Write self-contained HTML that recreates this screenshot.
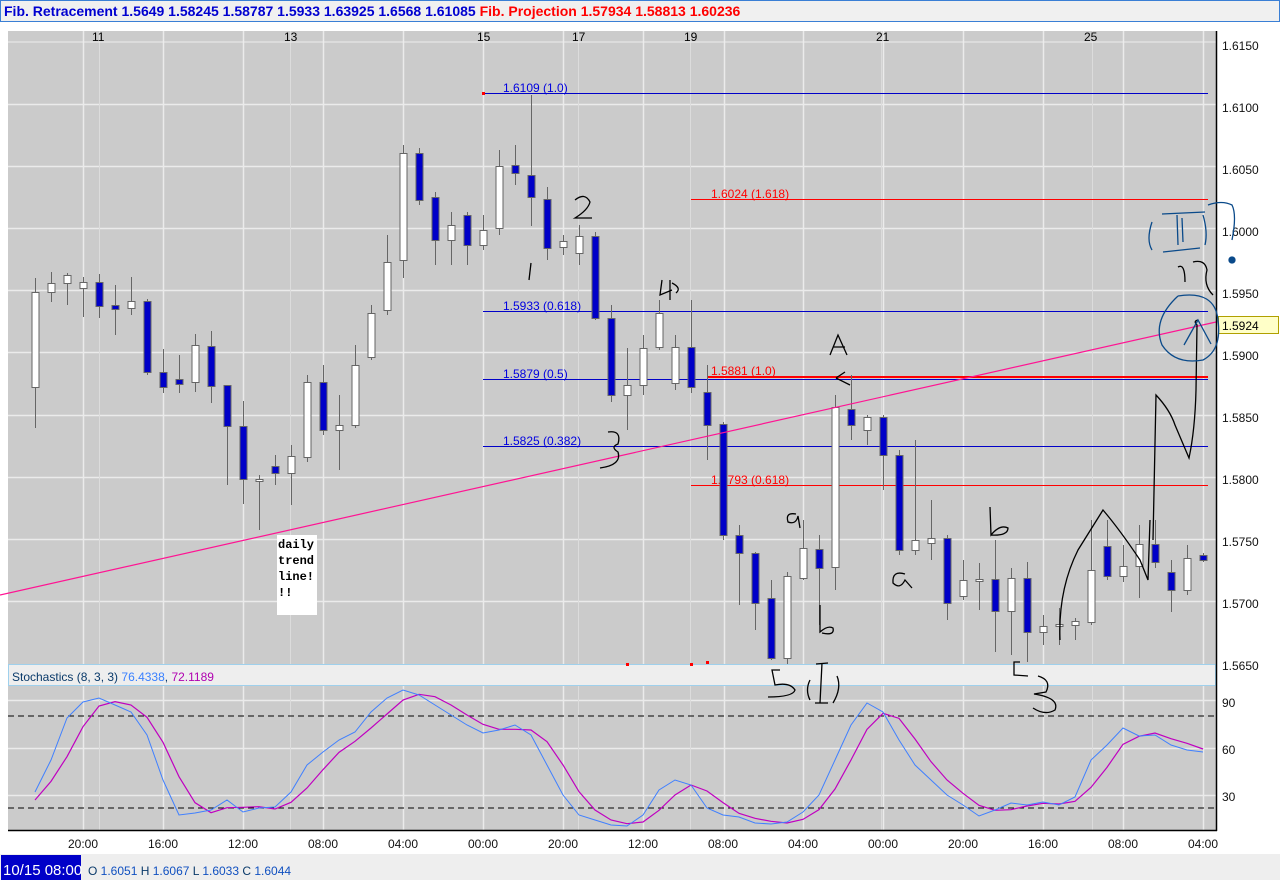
<!DOCTYPE html>
<html><head><meta charset="utf-8"><style>
body{margin:0;width:1280px;height:880px;overflow:hidden;background:#fff;font-family:"Liberation Sans",sans-serif}
svg{position:absolute;left:0;top:0}
</style></head><body>
<svg id="s" width="1280" height="880" xmlns="http://www.w3.org/2000/svg" font-family="Liberation Sans, sans-serif">
<rect x="0" y="0" width="1280" height="880" fill="#fff"/>
<rect x="0.5" y="0.5" width="1279" height="21" fill="#f0f0f0" stroke="#3a7fd5"/>
<text x="4" y="16" font-size="14" font-weight="bold" fill="#0000d0">Fib. Retracement 1.5649 1.58245 1.58787 1.5933 1.63925 1.6568 1.61085 <tspan fill="#ff0000">Fib. Projection 1.57934 1.58813 1.60236</tspan></text>
<rect x="8" y="31" width="1208" height="799" fill="#cbcbcb"/>
<g id="grid"></g>
<line x1="8" y1="42" x2="1216" y2="42" stroke="#eee" stroke-width="1"/>
<g font-size="12" fill="#000">
<text x="92" y="41">11</text><text x="284" y="41">13</text><text x="477" y="41">15</text><text x="572" y="41">17</text><text x="684" y="41">19</text><text x="876" y="41">21</text><text x="1084" y="41">25</text>
</g>
<!-- fib lines -->
<line x1="483" y1="93.5" x2="1208" y2="93.5" stroke="#0000c8"/>
<rect x="482" y="92" width="3" height="3" fill="red"/>
<line x1="691" y1="199.5" x2="1208" y2="199.5" stroke="#ff0000"/>
<line x1="483" y1="311.5" x2="1208" y2="311.5" stroke="#0000c8"/>
<line x1="707" y1="376.5" x2="1208" y2="376.5" stroke="#ff0000"/>
<line x1="483" y1="379.5" x2="1208" y2="379.5" stroke="#0000c8"/>
<line x1="707" y1="377.5" x2="1208" y2="377.5" stroke="#ff0000"/>
<line x1="483" y1="446.5" x2="1208" y2="446.5" stroke="#0000c8"/>
<line x1="691" y1="485.5" x2="1208" y2="485.5" stroke="#ff0000"/>
<g font-size="12">
<text x="503" y="92" fill="#0000e0">1.6109 (1.0)</text>
<text x="711" y="198" fill="#ff0000">1.6024 (1.618)</text>
<text x="503" y="310" fill="#0000e0">1.5933 (0.618)</text>
<text x="503" y="378" fill="#0000e0">1.5879 (0.5)</text>
<text x="711" y="375" fill="#ff0000">1.5881 (1.0)</text>
<text x="503" y="445" fill="#0000e0">1.5825 (0.382)</text>
<text x="711" y="484" fill="#ff0000">1.5793 (0.618)</text>
</g>
<g id="candles"></g>
<line x1="0" y1="595" x2="1216" y2="322" stroke="#ff1493" stroke-width="1.2"/>
<rect x="277" y="535" width="40" height="80" fill="#fff"/>
<g font-family="Liberation Mono, monospace" font-weight="bold" font-size="12" fill="#000">
<text x="278" y="548">daily</text><text x="278" y="564">trend</text><text x="278" y="580">line!</text><text x="278" y="596">!!</text>
</g>
<!-- stochastics panel -->
<rect x="8.5" y="664.5" width="1207" height="21" fill="#eeeeee" stroke="#9fd0ec"/>
<text x="12" y="681" font-size="12" fill="#0a3a6a">Stochastics (8, 3, 3) <tspan fill="#3a80ff">76.4338</tspan>, <tspan fill="#b000b0">72.1189</tspan></text>
<line x1="8" y1="716" x2="1216" y2="716" stroke="#000" stroke-dasharray="6,4"/>
<line x1="8" y1="808" x2="1216" y2="808" stroke="#000" stroke-dasharray="6,4"/>
<g id="stoch"></g>
<line x1="8" y1="830.5" x2="1217" y2="830.5" stroke="#000" stroke-width="1.5"/>
<line x1="1216.5" y1="31" x2="1216.5" y2="831" stroke="#000" stroke-width="1.5"/>
<g font-size="12" fill="#111">
<text x="1222" y="50">1.6150</text><text x="1222" y="112">1.6100</text><text x="1222" y="174">1.6050</text><text x="1222" y="236">1.6000</text><text x="1222" y="298">1.5950</text><text x="1222" y="360">1.5900</text><text x="1222" y="422">1.5850</text><text x="1222" y="484">1.5800</text><text x="1222" y="546">1.5750</text><text x="1222" y="608">1.5700</text><text x="1222" y="670">1.5650</text>
<text x="1222" y="707">90</text><text x="1222" y="754">60</text><text x="1222" y="801">30</text>
</g>
<rect x="1218.5" y="316.5" width="60" height="17" fill="#ffffc8" stroke="#b0a000"/>
<text x="1222" y="330" font-size="12" fill="#000">1.5924</text>
<g font-size="12" fill="#111">
<text x="68" y="848">20:00</text><text x="148" y="848">16:00</text><text x="228" y="848">12:00</text><text x="308" y="848">08:00</text><text x="388" y="848">04:00</text><text x="468" y="848">00:00</text><text x="548" y="848">20:00</text><text x="628" y="848">12:00</text><text x="708" y="848">08:00</text><text x="788" y="848">04:00</text><text x="868" y="848">00:00</text><text x="948" y="848">20:00</text><text x="1028" y="848">16:00</text><text x="1108" y="848">08:00</text><text x="1188" y="848">04:00</text>
</g>
<rect x="0" y="854" width="1280" height="26" fill="#eeeeee"/>
<rect x="1" y="855" width="80" height="25" fill="#0000c8"/>
<text x="3" y="875" font-size="15" fill="#fff">10/15 08:00</text>
<text x="88" y="875" font-size="12" fill="#0a3a6a">O <tspan fill="#1050c0">1.6051</tspan> H <tspan fill="#1050c0">1.6067</tspan> L <tspan fill="#1050c0">1.6033</tspan> C <tspan fill="#1050c0">1.6044</tspan></text>
<!-- hand annotations -->
<g fill="none" stroke="#000" stroke-width="1.3">
<path d="M575 200 Q585 192 590 202 Q588 210 575 218 L592 218"/>
<path d="M531 263 L529 280"/>
<path d="M662 280 L660 295 L672 290 M670 280 L670 300 M672 283 Q682 288 676 293"/>
<path d="M608 432 Q622 430 618 444 Q610 447 618 452 Q622 465 600 468"/>
<path d="M830 355 L838 335 L847 355 M833 347 L845 347"/>
<path d="M836 378 L845 372 M836 378 L850 385"/>
<path d="M796 514 Q785 512 788 522 Q796 525 798 516 L800 528"/>
<path d="M820 605 L820 632 Q828 625 833 628 Q835 636 822 633"/>
<path d="M905 574 Q892 570 893 583 Q900 590 905 580 L912 588"/>
<path d="M990 507 L991 535 Q1000 524 1008 528 Q1008 536 991 535"/>
<path d="M780 670 L772 670 L775 685 Q790 682 795 690 Q793 697 768 697"/>
<path d="M810 680 Q805 690 810 700 M816 664 L828 663 M822 663 L820 703 M815 703 L828 703 M837 676 Q842 688 833 703"/>
<path d="M1020 662 L1014 662 L1014 675 L1028 676"/>
<path d="M1038 676 Q1052 680 1046 692 L1034 694 Q1060 698 1055 710 Q1045 716 1033 708"/>
<path d="M1060 640 Q1058 590 1078 550 L1103 510 Q1120 530 1140 560 L1148 580 L1150 520"/>
<path d="M1153 540 L1156 395 Q1170 410 1175 425 L1189 458 Q1195 430 1196 390 L1197 325 Q1193 321 1198 320"/>
<path d="M1178 267 Q1185 263 1185 282 M1193 262 Q1205 259 1207 270 Q1203 285 1213 295"/>
</g>
<g fill="none" stroke="#0a4a8a" stroke-width="1.3">
<path d="M1152 222 Q1146 240 1152 250 M1162 214 L1205 212 M1177 215 L1178 245 M1182 218 L1183 242 M1163 252 L1200 248 M1203 215 Q1208 232 1205 245"/>
<path d="M1208 205 Q1222 200 1232 205 Q1237 215 1232 240"/>
<path d="M1178 296 Q1215 290 1218 320 Q1222 350 1203 360 Q1175 365 1162 345 Q1152 320 1178 296"/>
<path d="M1184 345 L1198 320 L1211 344"/>
<circle cx="1232" cy="260" r="3" fill="#0a4a8a"/>
</g>
<rect x="626" y="663" width="3" height="3" fill="red"/><rect x="690" y="663" width="3" height="3" fill="red"/><rect x="706" y="661" width="3" height="3" fill="red"/>
</svg>
<script>
var NS="http://www.w3.org/2000/svg";
function el(p,t,a){var e=document.createElementNS(NS,t);for(var k in a)e.setAttribute(k,a[k]);document.getElementById(p).appendChild(e);return e;}
// grid
[104,166,228,290,352,415,477,539,601,700,748,795].forEach(function(y){el("grid","line",{x1:8,x2:1216,y1:y+.5,y2:y+.5,stroke:"#ebebeb","stroke-width":1.5});});
[83,163,243,323,403,483,563,643,724,803,883,963,1043,1123,1203].forEach(function(x){el("grid","line",{x1:x+.5,x2:x+.5,y1:31,y2:830,stroke:"#ebebeb","stroke-width":1.5});});
[99,290,578,690,881,1092].forEach(function(x){el("grid","line",{x1:x+.5,x2:x+.5,y1:31,y2:830,stroke:"#dcdcdc"});});
// candles: [white?, top, bottom, wickTop, wickBot]
var C=[[1,292,387,278,428],[1,283,292,272,302],[1,275,283,273,305],[1,282,288,277,317],[0,282,306,274,318],[0,305,309,285,335],[1,301,308,277,315],[0,301,372,299,375],[0,372,387,349,393],[0,379,384,355,393],[1,345,382,334,392],[0,346,386,331,403],[0,385,426,385,485],[0,426,479,401,504],
[1,479,481,475,530],[0,466,473,455,485],[1,456,473,445,505],[1,382,457,375,462],[0,382,430,365,435],[1,425,430,395,470],[1,365,425,345,428],[1,313,357,305,360],[1,262,310,235,315],[1,153,260,145,278],[0,153,200,148,205],[0,197,240,192,265],[1,225,240,212,265],[0,215,245,212,265],[1,230,245,215,250],[1,166,228,150,235],[0,165,173,145,185],[0,175,197,95,226],[0,199,248,187,260],[1,241,247,235,255],[1,236,253,225,265],[0,236,318,232,320],[0,318,395,305,402],[1,385,395,348,430],[1,348,385,335,395],[1,313,347,300,350],[1,347,383,335,390],[0,347,387,300,393],[0,392,425,365,460],[0,424,535,422,540],[0,535,553,525,605],[0,553,603,552,630],[0,598,658,580,660],[1,576,658,572,665],[1,548,578,520,580],[0,549,568,535,625],[1,407,567,395,590],[0,409,425,375,440],[1,417,430,415,445],[0,417,455,415,490],[0,455,550,450,555],[1,540,550,440,555],[1,538,543,500,560],[0,538,603,535,620],[1,580,596,560,600],[1,579,581,563,610],[0,579,611,540,652],[1,578,611,568,655],[0,578,632,562,662],[1,626,632,615,645],[1,624,626,608,645],[1,621,625,618,640],[1,570,622,520,625],[0,546,576,520,580],[1,566,576,545,582],[1,544,566,525,598],[0,544,562,520,568],[0,572,590,560,612],[1,558,590,545,595],[0,555,560,553,562]];
C.forEach(function(c,i){var x=35+16*i;
el("candles","line",{x1:x+.5,x2:x+.5,y1:c[3],y2:c[4],stroke:"#666"});
var h=Math.max(c[2]-c[1],2);
el("candles","rect",{x:x-3,y:c[1]+.5,width:7,height:h,fill:c[0]?"#fff":"#0000c8",stroke:"#666"});});
var B=[792,760,718,702,698,705,712,735,780,815,813,810,800,812,808,807,792,765,752,740,732,712,698,690,695,705,715,725,733,730,725,735,765,795,815,820,825,826,815,790,780,785,808,815,817,823,824,822,812,795,760,725,703,712,740,765,780,795,805,816,810,803,805,802,805,797,760,745,728,736,735,745,750,752];
var M=[];for(var i=0;i<B.length;i++){var a=B[Math.max(0,i-2)],b=B[Math.max(0,i-1)],c=B[i];M.push(i==0?800:(a+b+c)/3);}
function pts(A){return A.map(function(v,i){return (35+16*i)+","+v;}).join(" ");}
el("stoch","polyline",{points:pts(M),fill:"none",stroke:"#c000c0","stroke-width":1.2});
el("stoch","polyline",{points:pts(B),fill:"none",stroke:"#4080ff","stroke-width":1});
</script>
</body></html>
